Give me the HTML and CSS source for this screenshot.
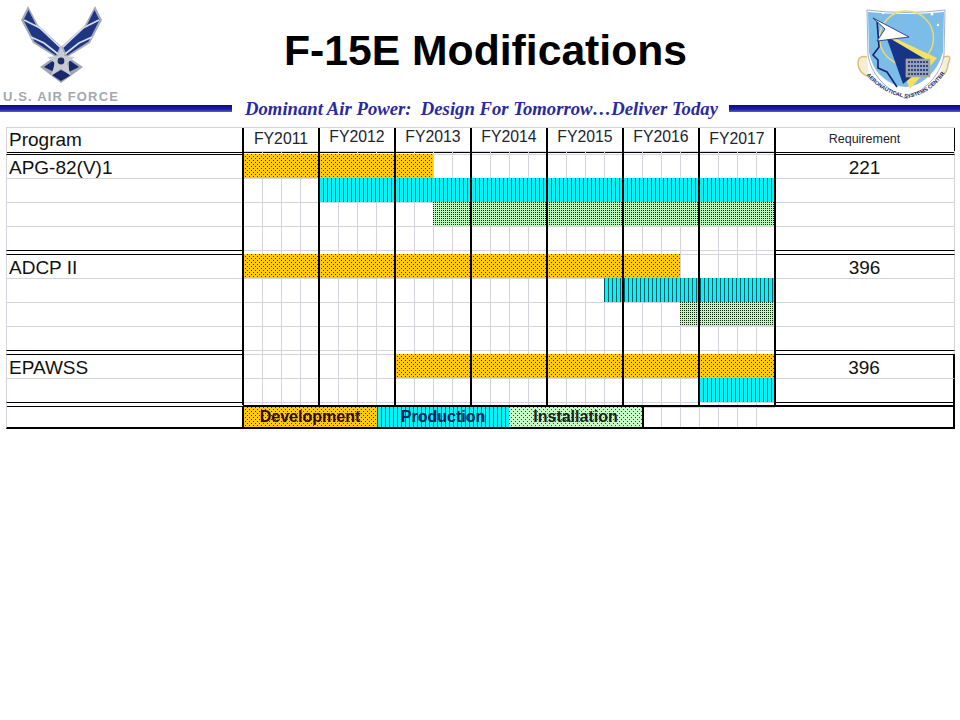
FILE: index.html
```html
<!DOCTYPE html>
<html>
<head>
  <meta charset="UTF-8">
  <title>F-15E Modifications</title>
  <link rel="stylesheet" href="styles.css">
</head>
<body>
  <div class="top">
    <div class="logo-left">
      <svg class="wing" width="120" height="90" viewBox="0 0 120 90">
        <!-- wings -->
        <path d="M28 6 L21 20 L33 43 L57 58 L62 47 L38 25 Z" fill="#a4aab8"/>
        <path d="M95 6 L102 20 L90 43 L66 58 L61 47 L85 25 Z" fill="#a4aab8"/>
        <path d="M28.500 10 L23.500 20 L34.500 41.500 L56 55.500 L59.500 47.500 L36.500 26 Z" fill="#1f3684"/>
        <path d="M94.500 10 L99.500 20 L88.500 41.500 L67 55.500 L63.500 47.500 L86.500 26 Z" fill="#1f3684"/>
        <path d="M24 20 L40 28 L60 47 M31 37 L44 43 L58 54" fill="none" stroke="#d8dee8" stroke-width="1.600"/>
        <path d="M99 20 L83 28 L63 47 M92 37 L79 43 L65 54" fill="none" stroke="#d8dee8" stroke-width="1.600"/>
        <!-- diamond and star -->
        <path d="M40 67 L61 52 L83 67 L61 83 Z" fill="#a0a6b2"/>
        <path d="M44 67 L54 60 L54 72 Z M79 67 L69 60 L69 72 Z M52 75 L61 70 L71 75 L61 81 Z" fill="#18286c"/>
        <path d="M61 46 L64.500 56 L75 57 L67 63 L71 76 L61 68.500 L51 76 L55 63 L47 57 L57.500 56 Z" fill="#c8ccd2"/>
        <circle cx="61" cy="61" r="3.400" fill="#1e2c6a"/>
      </svg>
      <div class="af-label">U.S. AIR FORCE</div>
    </div>
    <h1 class="title">F-15E Modifications</h1>
    <div class="logo-right">
      <svg width="109" height="105" viewBox="11 0 109 105">
        <defs>
          <path id="ribbon" d="M23 70 Q38 93 67 98 Q94 94 109 66"/>
        </defs>
        <!-- scrolls -->
        <path d="M27 57 Q18 55 18 63 Q18 73 29 77 M104 57 Q113 54 108 64 Q108 73 100 77" fill="#f6eed4" stroke="#d8c078" stroke-width="1.500"/>
        <!-- shield -->
        <path d="M27 10 Q66 15 105 10 L104 55 Q100 82 66 99 Q32 82 28 55 Z" fill="#ffffff" stroke="#8a9ab8" stroke-width="0.800"/>
        <path d="M28 12 Q66 16 104 12 L103 52 Q99 66 91 74 Q66 100 39 74 Q32 66 29 52 Z" fill="#7cbce8"/>
        <circle cx="66.500" cy="38" r="27" fill="none" stroke="#ecdc68" stroke-width="1.500"/>
        <!-- head outline -->
        <path d="M37 20 L39 47 L33 55 L38 60 L38 68 L47 72 L57 87" fill="none" stroke="#16246c" stroke-width="1.600"/>
        <!-- beam -->
        <path d="M46 34 L97 58 L70 89 Z" fill="#f2e268"/>
        <path d="M46 36 L90 62 L63 84 Z" fill="#173488"/>
        <rect x="66" y="59" width="24" height="18" fill="#95a2b8" stroke="#c8b860" stroke-width="0.600"/>
        <path d="M68 62 H88 M68 66 H88 M68 70 H88 M68 74 H88" stroke="#16246c" stroke-width="1.300" stroke-dasharray="2 1"/>
        <!-- dart -->
        <path d="M33 18 L69 37 L37 41 L45 29 Z" fill="#ffffff" stroke="#16246c" stroke-width="0.800"/>
        <circle cx="43" cy="13" r="1.200" fill="#fff"/>
        <circle cx="92" cy="14" r="1.500" fill="#fff"/>
        <circle cx="98" cy="25" r="1.300" fill="#fff"/>
        <text class="ribbon-text"><textPath href="#ribbon" startOffset="6">AERONAUTICAL SYSTEMS CENTER</textPath></text>
      </svg>
    </div>
  </div>

  <div class="band">
    <div class="bar bar-left"></div>
    <div class="tagline">Dominant Air Power:  Design For Tomorrow…Deliver Today</div>
    <div class="bar bar-right"></div>
  </div>

  <div class="chart">
    <div class="row row-head">
      <div class="name">Program</div>
      <div class="track years">
        <div class="year low">FY2011</div>
        <div class="year">FY2012</div>
        <div class="year">FY2013</div>
        <div class="year">FY2014</div>
        <div class="year">FY2015</div>
        <div class="year">FY2016</div>
        <div class="year low">FY2017</div>
      </div>
      <div class="req req-label">Requirement</div>
    </div>
    <div class="row rule rule-first"><div class="name"></div><div class="track"></div><div class="req"></div></div>

    <div class="row first">
      <div class="name">APG-82(V)1</div>
      <div class="track"><div class="gbar dev" style="grid-column: 1 / span 10"></div></div>
      <div class="req">221</div>
    </div>
    <div class="row">
      <div class="name"></div>
      <div class="track"><div class="gbar prod" style="grid-column: 5 / span 24"></div></div>
      <div class="req"></div>
    </div>
    <div class="row">
      <div class="name"></div>
      <div class="track"><div class="gbar inst" style="grid-column: 11 / span 18"></div></div>
      <div class="req"></div>
    </div>
    <div class="row">
      <div class="name"></div>
      <div class="track"></div>
      <div class="req"></div>
    </div>
    <div class="row rule"><div class="name"></div><div class="track"></div><div class="req"></div></div>

    <div class="row first">
      <div class="name">ADCP II</div>
      <div class="track"><div class="gbar dev" style="grid-column: 1 / span 23"></div></div>
      <div class="req">396</div>
    </div>
    <div class="row">
      <div class="name"></div>
      <div class="track"><div class="gbar prod" style="grid-column: 20 / span 9"></div></div>
      <div class="req"></div>
    </div>
    <div class="row">
      <div class="name"></div>
      <div class="track"><div class="gbar inst" style="grid-column: 24 / span 5"></div></div>
      <div class="req"></div>
    </div>
    <div class="row">
      <div class="name"></div>
      <div class="track"></div>
      <div class="req"></div>
    </div>
    <div class="row rule"><div class="name"></div><div class="track"></div><div class="req"></div></div>

    <div class="row first closed">
      <div class="name">EPAWSS</div>
      <div class="track"><div class="gbar dev" style="grid-column: 9 / span 20"></div></div>
      <div class="req">396</div>
    </div>
    <div class="row closed">
      <div class="name"></div>
      <div class="track"><div class="gbar prod" style="grid-column: 25 / span 4"></div></div>
      <div class="req"></div>
    </div>
    <div class="row rule rule-last closed"><div class="name"></div><div class="track"></div><div class="req"></div></div>

    <div class="row row-foot closed">
      <div class="name"></div>
      <div class="track legend">
        <div class="key key-dev dev">Development</div>
        <div class="key key-prod prod">Production</div>
        <div class="key key-inst inst-light">Installation</div>
      </div>
      <div class="req"></div>
    </div>
  </div>
</body>
</html>
```

FILE: styles.css
```css
body {
  margin: 0;
  background: #fff;
  font-family: "Liberation Sans", Arial, sans-serif;
  color: #111;
}

/* header */
.top {
  display: flex;
  height: 105px;
}

.logo-left {
  width: 120px;
}

.wing {
  display: block;
}

.af-label {
  padding-left: 3px;
  font-size: 13px;
  line-height: 14px;
  font-weight: bold;
  letter-spacing: 1.150px;
  white-space: nowrap;
  color: #a4a8b0;
}

.logo-right {
  width: 109px;
}

.logo-right svg {
  display: block;
}

.ribbon-text {
  font-family: "Liberation Sans", Arial, sans-serif;
  font-size: 5.400px;
  font-weight: bold;
  fill: #1c2460;
}

.title {
  flex: 1;
  margin: 0;
  font-size: 42.700px;
  line-height: 100px;
  font-weight: bold;
  text-align: center;
  color: #000;
}

.band {
  display: flex;
  align-items: center;
  height: 7px;
}

.bar {
  height: 7px;
  background: linear-gradient(#0c0c86, #1c1ca0 60%, #5a62b8);
}

.bar-left {
  width: 232px;
}

.bar-right {
  flex: 1;
}

.tagline {
  margin: 0 11px 0 13px;
  font-family: "Liberation Serif", "Times New Roman", serif;
  font-size: 18.700px;
  line-height: 7px;
  font-weight: bold;
  font-style: italic;
  white-space: pre;
  color: #2a2aa0;
}

/* chart */
.chart {
  margin: 15px 0 0 6px;
  width: 949px;
  border-top: 1px solid #d4d4dc;
}

.row {
  display: grid;
  grid-template-columns: 237px 532px 180px;
  height: 24px;
}

.name,
.req {
  display: flex;
  align-items: center;
  box-sizing: border-box;
  font-size: 19px;
  border-top: 1px solid #d4d4dc;
}

.name {
  padding-left: 2px;
  border-left: 1px solid #d4d4dc;
}

.req {
  justify-content: center;
  border-right: 1px solid #d4d4dc;
}

.closed .req {
  border-right: 2px solid #000;
}

.track {
  position: relative;
  display: grid;
  grid-template-columns: repeat(28, 19px);
  background:
    linear-gradient(#d4d4dc 1px, transparent 1px),
    repeating-linear-gradient(90deg, #d4d4dc 0 1px, transparent 1px 19px);
}

/* year lines run over the bars */
.track::after {
  content: "";
  position: absolute;
  top: 0;
  bottom: 0;
  left: -1px;
  width: 534px;
  background: repeating-linear-gradient(90deg, #000 0 2px, transparent 2px 76px);
}

.row-head {
  height: 23px;
}

.row-head .name,
.row-head .req,
.row-head .track {
  border-top: 0;
  border-bottom: 1px solid #000;
}

.row-head .req {
  border-right: 1px solid #000;
}

.years {
  grid-template-columns: repeat(7, 76px);
  background: none;
}

.year {
  display: flex;
  align-items: center;
  justify-content: center;
  padding-bottom: 6px;
  font-size: 15.800px;
  color: #22242e;
}

.year.low {
  padding-bottom: 2px;
}

.req-label {
  padding-bottom: 2px;
  font-size: 12.500px;
  color: #22242e;
}

.rule {
  height: 4px;
}

.rule .name,
.rule .req {
  border-top: 1px solid #000;
}

.rule-first {
  height: 3px;
}

.rule-first .name,
.rule-first .req {
  border-top: 0;
}

.rule-last {
  height: 3px;
}

.first .name,
.first .req {
  padding-top: 2px;
  border-top: 1px solid #000;
}

.gbar {
  grid-row: 1;
  height: 24px;
}

.dev {
  background:
    conic-gradient(at 1px 1px, transparent 270deg, #4a3200 0) 0 0 / 4px 4px,
    conic-gradient(at 1px 1px, transparent 270deg, #4a3200 0) 2px 2px / 4px 4px,
    #ffc80c;
}

.prod {
  background:
    repeating-linear-gradient(90deg, #035a60 0 1px, #02f4f8 1px 4px);
}

.inst {
  background:
    conic-gradient(at 1px 1px, transparent 270deg, #0c2a0c 0) 0 0 / 2px 2px,
    #bcf8bc;
}

.inst-light {
  background:
    conic-gradient(at 1px 1px, transparent 270deg, #2c4a2c 0) 0 0 / 4px 4px,
    conic-gradient(at 1px 1px, transparent 270deg, #2c4a2c 0) 2px 2px / 4px 4px,
    #c4fac4;
}

/* legend row */
.row-foot .name,
.row-foot .req,
.row-foot .track {
  box-sizing: border-box;
  border-bottom: 2px solid #000;
}

.row-foot .req,
.row-foot .track {
  border-top: 2px solid #000;
}

.row-foot .name {
  border-top: 0;
  box-shadow: inset 0 1px #fff, inset 0 2px #000;
}

.row-foot .req {
  border-right: 2px solid #000;
}

.legend {
  display: flex;
}

.legend::after {
  width: 2px;
  background: #000;
}

.key {
  display: flex;
  align-items: center;
  justify-content: center;
  height: 100%;
  font-size: 16px;
  font-weight: bold;
  color: #2a0c10;
}

.key-dev {
  width: 134px;
}

.key-prod {
  width: 132px;
  color: #041c54;
}

.key-inst {
  width: 133px;
  border-right: 2px solid #000;
  color: #14241c;
}
```
